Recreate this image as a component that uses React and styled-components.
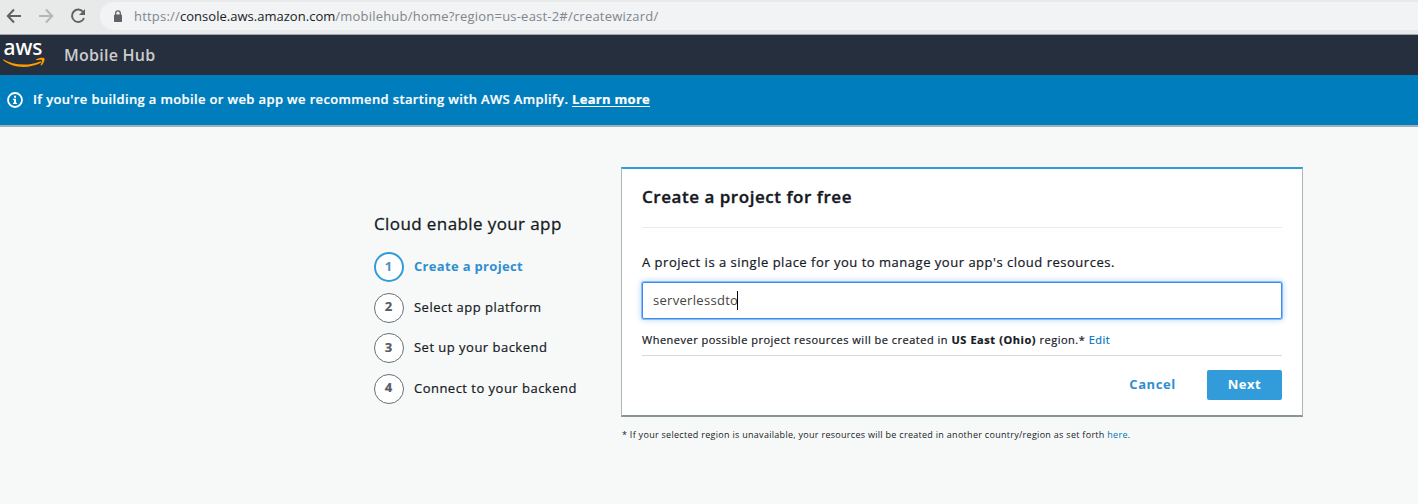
import React from 'react';
import styled, { createGlobalStyle } from 'styled-components';

const GlobalStyle = createGlobalStyle`
  * { box-sizing: border-box; }
  body {
    margin: 0;
    background: #f7f9f8;
    color: #16191f;
    font-family: "Open Sans", "Noto Sans", sans-serif;
    font-size: 13px;
  }
`;

const Page = styled.div`
  height: 504px;
  overflow: hidden;
`;

const BrowserBar = styled.div`
  display: flex;
  align-items: flex-start;
  height: 35px;
  padding-top: 2px;
  background: #e8eaea;
  border-bottom: 1px solid #a3a6a9;
`;

const NavIcons = styled.div`
  display: flex;
  width: 100px;
  height: 28px;
`;

const AddressBar = styled.div`
  display: flex;
  align-items: center;
  flex: 1;
  height: 28px;
  padding-left: 13px;
  border-radius: 14px 0 0 14px;
  background: #f1f3f4;
`;

const Url = styled.div`
  padding-left: 11px;
  line-height: 28px;
  font-size: 13px;
  letter-spacing: 0.21px;
  color: #80868b;
  white-space: nowrap;
`;

const Host = styled.span`
  color: #202124;
  letter-spacing: 0.02px;
`;

const Header = styled.header`
  display: flex;
  align-items: center;
  height: 40px;
  background: #262f3e;
`;

const Logo = styled.div`
  width: 64px;
  height: 40px;

  svg {
    display: block;
    overflow: visible;
  }
`;

const ServiceName = styled.div`
  font-size: 16px;
  font-weight: 600;
  letter-spacing: 0.25px;
  line-height: 40px;
  color: #cccccc;
`;

const Banner = styled.div`
  display: flex;
  align-items: center;
  height: 52px;
  padding: 0 0 0 7px;
  background: #007dbc;
  border-bottom: 2px solid #9fb0b8;
  color: #fff;
  font-weight: 600;
  letter-spacing: 0.36px;
`;

const BannerText = styled.div`
  padding-left: 10px;
  padding-bottom: 3px;
  white-space: nowrap;
  -webkit-text-stroke: 0.2px;
`;

const BannerLink = styled.a`
  color: #fff;
  font-weight: 700;
  letter-spacing: 0.29px;
  text-decoration: underline;
  text-underline-offset: 2px;
`;

const Main = styled.main`
  display: flex;
  align-items: flex-start;
  padding: 40px 0 0 374px;
`;

const Steps = styled.aside`
  width: 247px;
  padding-top: 44px;
`;

const StepsTitle = styled.h2`
  margin: 0 0 16px;
  font-size: 17px;
  font-weight: 400;
  letter-spacing: 0.4px;
  line-height: 25px;
  -webkit-text-stroke: 0.3px;
`;

const StepList = styled.ol`
  display: grid;
  grid-auto-rows: 40.6px;
  margin: 0;
  padding: 0;
  list-style: none;
`;

const Step = styled.li`
  display: flex;
  align-items: flex-start;
  gap: 10px;
  height: 30px;
  color: ${(p) => (p.$active ? '#2f8fd0' : '#16191f')};
  font-weight: ${(p) => (p.$active ? 700 : 400)};
  letter-spacing: ${(p) => (p.$active ? '0.32px' : '0.48px')};
  line-height: 28px;
  white-space: nowrap;
  -webkit-text-stroke: ${(p) => (p.$active ? '0' : '0.2px')};
`;

const StepNumber = styled.span`
  display: flex;
  align-items: center;
  justify-content: center;
  width: 30px;
  height: 30px;
  padding: 0 1px 2px 0;
  border: ${(p) => (p.$active ? '2px solid #329bd9' : '1px solid #687078')};
  border-radius: 50%;
  background: #fff;
  color: ${(p) => (p.$active ? '#4e8fbd' : '#545b64')};
  font-weight: 700;
  letter-spacing: 0;
  line-height: 1;
`;

const ProjectColumn = styled.section`
  width: 682px;
`;

const Card = styled.div`
  height: 250px;
  padding: 0 20px;
  border: 1px solid #aab7b8;
  border-top: 2px solid #329bd9;
  border-bottom: 2px solid #879596;
  background: #fff;
`;

const CardTitle = styled.h1`
  height: 59px;
  margin: 0;
  border-bottom: 1px solid #e9ebed;
  font-size: 17px;
  font-weight: 600;
  letter-spacing: 0.53px;
  line-height: 55px;
  -webkit-text-stroke: 0.35px;
`;

const Prompt = styled.p`
  margin: 24px 0 10px;
  letter-spacing: 0.51px;
  line-height: 20px;
  white-space: nowrap;
  -webkit-text-stroke: 0.2px;
`;

const Field = styled.div`
  display: flex;
  align-items: center;
  height: 37px;
  padding: 0 0 2px 10px;
  border: 1px solid #3b8eea;
  border-radius: 2px;
  box-shadow: 0 0 0 1px #8bbcf5, 0 0 6px 1px #b9d8fb;
  color: #444;
  letter-spacing: 0.3px;
`;

const Caret = styled.i`
  width: 1px;
  height: 19px;
  margin: 1px 0 0 -1px;
  background: #000;
`;

const RegionNote = styled.p`
  height: 37px;
  margin: 0;
  padding-top: 11px;
  border-bottom: 1px solid #d5dbdb;
  font-size: 11px;
  letter-spacing: 0.5px;
  line-height: 20px;
  white-space: nowrap;
  -webkit-text-stroke: 0.2px;
`;

const Region = styled.strong`
  font-weight: 700;
  letter-spacing: 0.57px;
`;

const Link = styled.a`
  color: #0073bb;
`;

const Actions = styled.div`
  display: flex;
  justify-content: flex-end;
  gap: 31px;
  padding-top: 14px;
`;

const Button = styled.button`
  height: 30px;
  padding: 0 0 2px;
  width: ${(p) => (p.$primary ? '75px' : '47px')};
  border: 0;
  border-radius: 2px;
  background: ${(p) => (p.$primary ? '#329bd9' : 'transparent')};
  color: ${(p) => (p.$primary ? '#fff' : '#2f8fd0')};
  font: 700 13px "Open Sans", sans-serif;
  letter-spacing: 0.55px;
`;

const Footnote = styled.p`
  margin: 8px 0 0 1px;
  font-size: 9px;
  letter-spacing: 0.29px;
  line-height: 20px;
  white-space: nowrap;
`;

const steps = ['Create a project', 'Select app platform', 'Set up your backend', 'Connect to your backend'];

function BrowserIcons() {
  return (
    <svg width="100" height="28" viewBox="0 2 100 28" fill="none" strokeWidth="2">
      <path d="M21 16H8M14 9.5L7.8 16l6.2 6.5" stroke="#5f6368" />
      <path d="M39 16h13M46 9.5l6.200 6.500-6.200 6.500" stroke="#b4b6b8" />
      <path d="M83.300 12.200A6.200 6.200 0 1 0 84 18" stroke="#5f6368" />
      <path d="M85 9v6h-6z" fill="#5f6368" />
    </svg>
  );
}

function LockIcon() {
  return (
    <svg width="10" height="13" viewBox="0 0 10 13">
      <path d="M2.700 5V3.200a2.300 2.300 0 0 1 4.600 0V5" fill="none" stroke="#5f6368" strokeWidth="1.300" />
      <rect x="1" y="4.500" width="8" height="7.500" rx="0.800" fill="#5f6368" />
    </svg>
  );
}

const Wordmark = styled.text`
  font: 500 22px "Noto Sans", sans-serif;
  fill: #fff;
`;

function AwsLogo() {
  return (
    <svg width="64" height="40" viewBox="0 35 64 40">
      <Wordmark x="3.500" y="55" textLength="39" lengthAdjust="spacingAndGlyphs">aws</Wordmark>
      <path d="M3.200 59.200C13 65.400 29 66.400 40.500 61.200l1 1.300C29 69 13 68.600 3 60z" fill="#ff9900" />
      <path d="M36 59.600c2.300-1.800 7-2.200 8.200-1.400 1.100 1-.4 5.200-2.800 7.300l-.9-.5c1-1.900 1.800-4.200 1.400-4.800-.5-.7-3.200-.4-5.700 0z" fill="#ff9900" />
    </svg>
  );
}

function InfoIcon() {
  return (
    <svg width="16" height="16" viewBox="0 0 16 16">
      <circle cx="8" cy="8" r="7" fill="none" stroke="#fff" strokeWidth="1.800" />
      <path d="M7 3.800h2v1.900H7zM6 6.800h3v4h1v1.300H6v-1.300h1V8.100H6z" fill="#fff" />
    </svg>
  );
}

export default function App() {
  return (
    <Page>
      <GlobalStyle />
      <BrowserBar>
        <NavIcons><BrowserIcons /></NavIcons>
        <AddressBar>
          <LockIcon />
          <Url>https://<Host>console.aws.amazon.com</Host>/mobilehub/home?region=us-east-2#/createwizard/</Url>
        </AddressBar>
      </BrowserBar>
      <Header>
        <Logo><AwsLogo /></Logo>
        <ServiceName>Mobile Hub</ServiceName>
      </Header>
      <Banner>
        <InfoIcon />
        <BannerText>
          If you're building a mobile or web app we recommend starting with AWS Amplify. <BannerLink>Learn more</BannerLink>
        </BannerText>
      </Banner>
      <Main>
        <Steps>
          <StepsTitle>Cloud enable your app</StepsTitle>
          <StepList>
            {steps.map((label, i) => (
              <Step key={label} $active={i === 0}>
                <StepNumber $active={i === 0}>{i + 1}</StepNumber>
                {label}
              </Step>
            ))}
          </StepList>
        </Steps>
        <ProjectColumn>
          <Card>
            <CardTitle>Create a project for free</CardTitle>
            <Prompt>A project is a single place for you to manage your app's cloud resources.</Prompt>
            <Field>serverlessdto<Caret /></Field>
            <RegionNote>
              Whenever possible project resources will be created in <Region>US East (Ohio)</Region> region.* <Link>Edit</Link>
            </RegionNote>
            <Actions>
              <Button>Cancel</Button>
              <Button $primary>Next</Button>
            </Actions>
          </Card>
          <Footnote>
            * If your selected region is unavailable, your resources will be created in another country/region as set forth <Link>here</Link>.
          </Footnote>
        </ProjectColumn>
      </Main>
    </Page>
  );
}
